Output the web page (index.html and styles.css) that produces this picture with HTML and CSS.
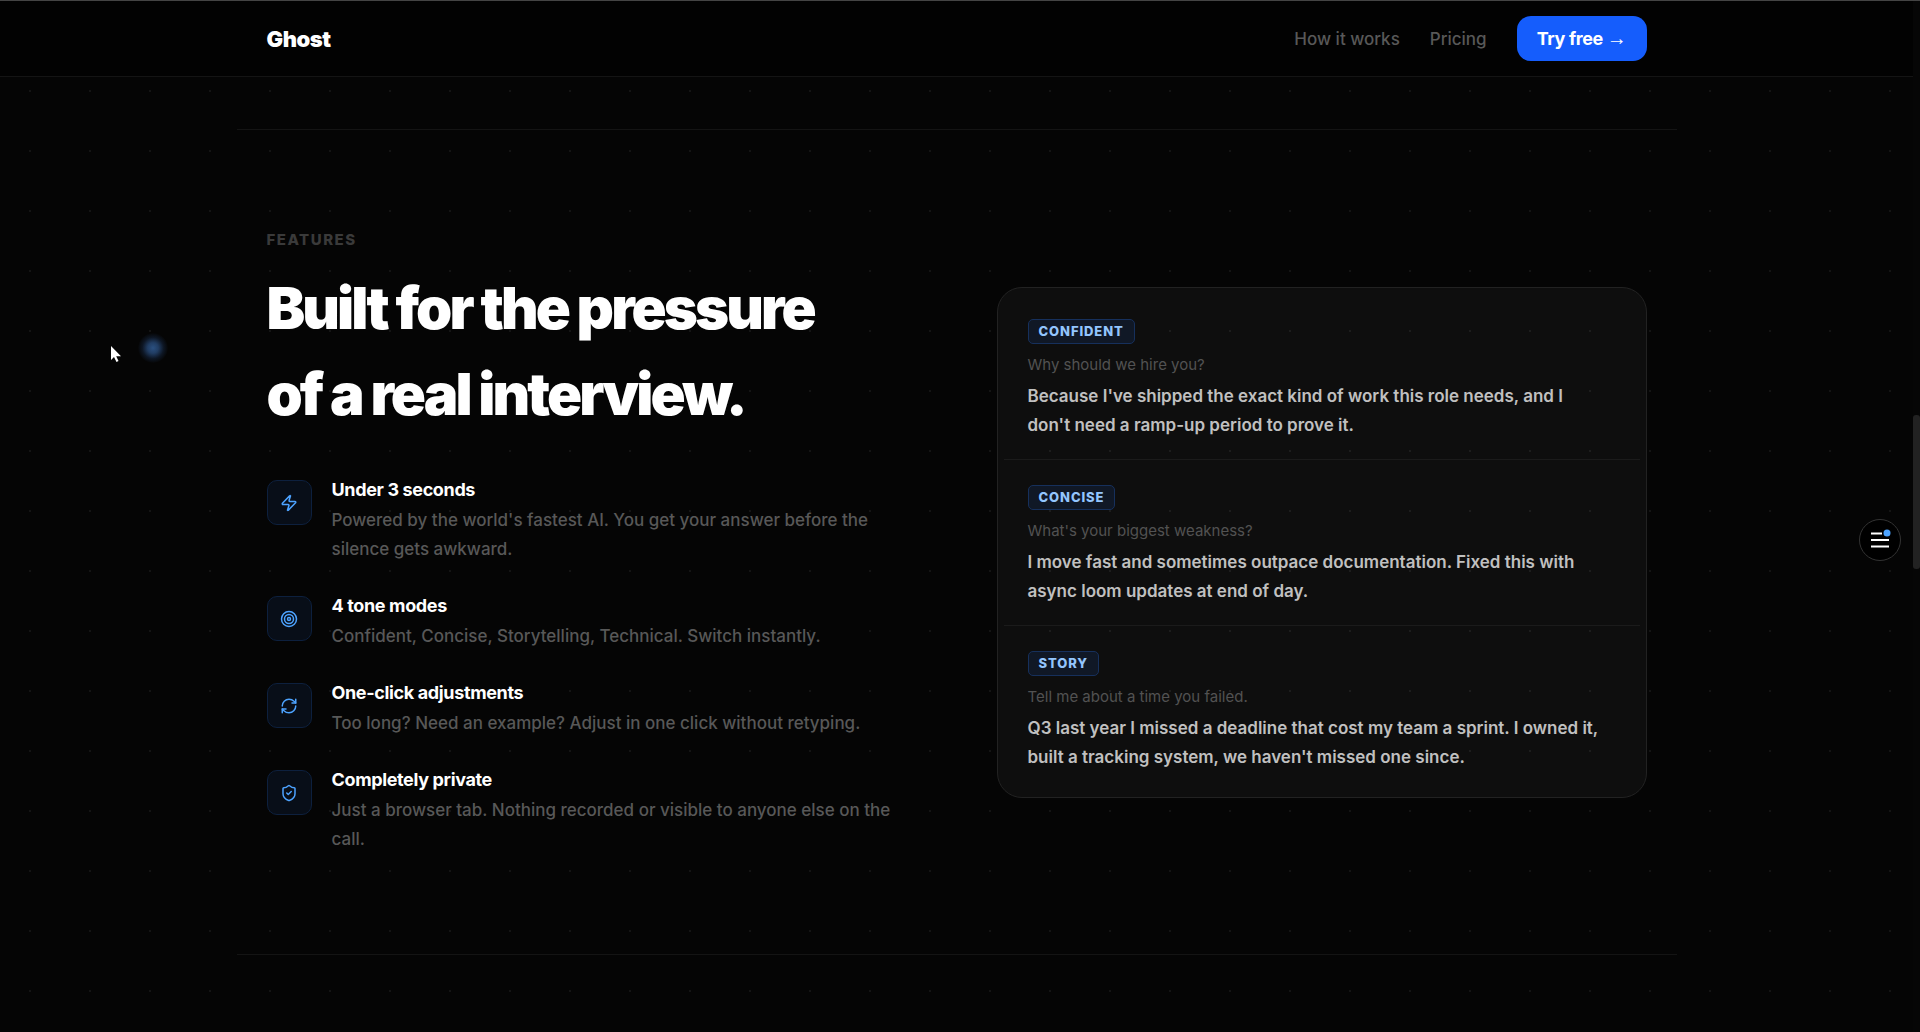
FILE: index.html
```html
<!DOCTYPE html>
<html lang="en">

<head>
    <meta charset="UTF-8">
    <meta name="viewport" content="width=device-width, initial-scale=1.0">
    <title>Ghost</title>
    <link rel="stylesheet" href="styles.css">
</head>

<body>
    <div class="page">
        <header class="nav">
            <div class="nav-inner">
                <a class="logo" href="#">Ghost</a>
                <nav class="nav-links">
                    <a href="#how">How it works</a>
                    <a href="#pricing">Pricing</a>
                    <button class="btn-try" type="button">Try free <span class="arrow">→</span></button>
                </nav>
            </div>
        </header>

        <main>
            <section class="features" id="features">
                <div class="features-text">
                    <p class="eyebrow">FEATURES</p>
                    <h2>Built for the pressure<br>of a real interview.</h2>

                    <ul class="feature-list">
                        <li class="feature">
                            <div class="feature-icon">
                                <svg viewBox="0 0 24 24"><path d="M4 14a1 1 0 0 1-.78-1.63l9.9-10.2a.5.5 0 0 1 .86.46l-1.92 6.02A1 1 0 0 0 13 10h7a1 1 0 0 1 .78 1.63l-9.9 10.2a.5.5 0 0 1-.86-.46l1.92-6.02A1 1 0 0 0 11 14z"/></svg>
                            </div>
                            <div>
                                <h3>Under 3 seconds</h3>
                                <p>Powered by the world's fastest AI. You get your answer before the silence gets awkward.</p>
                            </div>
                        </li>
                        <li class="feature">
                            <div class="feature-icon">
                                <svg viewBox="0 0 24 24"><circle cx="12" cy="12" r="10"/><circle cx="12" cy="12" r="6"/><circle cx="12" cy="12" r="2"/></svg>
                            </div>
                            <div>
                                <h3>4 tone modes</h3>
                                <p>Confident, Concise, Storytelling, Technical. Switch instantly.</p>
                            </div>
                        </li>
                        <li class="feature">
                            <div class="feature-icon">
                                <svg viewBox="0 0 24 24"><path d="M3 12a9 9 0 0 1 9-9 9.75 9.75 0 0 1 6.74 2.74L21 8"/><path d="M21 3v5h-5"/><path d="M21 12a9 9 0 0 1-9 9 9.75 9.75 0 0 1-6.74-2.74L3 16"/><path d="M8 16H3v5"/></svg>
                            </div>
                            <div>
                                <h3>One-click adjustments</h3>
                                <p>Too long? Need an example? Adjust in one click without retyping.</p>
                            </div>
                        </li>
                        <li class="feature">
                            <div class="feature-icon">
                                <svg viewBox="0 0 24 24"><path d="M20 13c0 5-3.5 7.5-7.66 8.95a1 1 0 0 1-.67-.01C7.5 20.5 4 18 4 13V6a1 1 0 0 1 1-1c2 0 4.500-1.200 6.240-2.720a1.170 1.170 0 0 1 1.520 0C14.510 3.810 17 5 19 5a1 1 0 0 1 1 1z"/><path d="m9 12 2 2 4-4"/></svg>
                            </div>
                            <div>
                                <h3>Completely private</h3>
                                <p>Just a browser tab. Nothing recorded or visible to anyone else on the call.</p>
                            </div>
                        </li>
                    </ul>
                </div>

                <div class="answers">
                    <article class="answer">
                        <span class="tag">CONFIDENT</span>
                        <p class="question">Why should we hire you?</p>
                        <p class="reply">Because I've shipped the exact kind of work this role needs, and I don't need a ramp-up period to prove it.</p>
                    </article>
                    <article class="answer">
                        <span class="tag">CONCISE</span>
                        <p class="question">What's your biggest weakness?</p>
                        <p class="reply">I move fast and sometimes outpace documentation. Fixed this with async loom updates at end of day.</p>
                    </article>
                    <article class="answer">
                        <span class="tag">STORY</span>
                        <p class="question">Tell me about a time you failed.</p>
                        <p class="reply">Q3 last year I missed a deadline that cost my team a sprint. I owned it, built a tracking system, we haven't missed one since.</p>
                    </article>
                </div>
            </section>
        </main>
    </div>

    <div class="scrollbar"><div class="thumb"></div></div>

    <button class="menu-fab" type="button" aria-label="Menu">
        <svg viewBox="0 0 42 42">
            <path d="M12 14.500h11M12 21h18M12 27.500h18" stroke="#fff" stroke-width="2"/>
            <circle cx="28" cy="14" r="3.500" fill="#4da3ff"/>
        </svg>
    </button>

    <div class="glow"></div>
    <svg class="cursor" viewBox="0 0 12 18"><path d="M1 1v14l3-3 2.500 5 2-1-2.300-4.700H11z" fill="#fff"/></svg>
</body>

</html>
```
FILE: styles.css
```css
* {
    box-sizing: border-box;
    margin: 0;
    padding: 0;
}

body {
    display: flex;
    min-height: 100vh;
    border-top: 1px solid #444;
    background-color: #050505;
    background-image: radial-gradient(circle, rgba(255, 255, 255, 0.06) 1px, transparent 1px);
    background-size: 60px 60px;
    background-position: 0 1px;
    color: #fff;
    font-family: Inter, "Liberation Sans", sans-serif;
    font-size: 17px;
    overflow: hidden;
}

.page {
    flex: 1;
}

/* nav */
.nav {
    height: 76px;
    background: #020202;
    border-bottom: 1px solid #141414;
}

.nav-inner {
    display: flex;
    align-items: center;
    justify-content: space-between;
    max-width: 1440px;
    height: 100%;
    margin: 0 auto;
    padding: 0 30px;
}

.logo {
    color: #fff;
    font-size: 22px;
    font-weight: 900;
    letter-spacing: -0.02em;
    text-decoration: none;
}

.nav-links {
    display: flex;
    align-items: center;
    gap: 30px;
}

.nav-links a {
    color: #585858;
    font-size: 17px;
    font-weight: 500;
    text-decoration: none;
}

.btn-try {
    height: 45px;
    padding: 0 20px;
    border: none;
    border-radius: 14px;
    background: #155dfc;
    color: #fff;
    font-family: inherit;
    font-size: 18px;
    font-weight: 700;
    letter-spacing: -0.02em;
    cursor: pointer;
}

.arrow {
    font-family: "Liberation Sans", sans-serif;
    font-size: 20px;
    font-weight: 400;
    line-height: 1;
}

/* features */
.features {
    display: grid;
    grid-template-columns: 1fr 1fr;
    gap: 80px;
    align-items: center;
    max-width: 1440px;
    margin: 52px auto 0;
    padding: 100px 30px;
    border-top: 1px solid #141414;
    border-bottom: 1px solid #141414;
}

.eyebrow {
    margin-bottom: 15px;
    color: #3a3a3a;
    font-size: 15px;
    font-weight: 800;
    line-height: 20px;
    letter-spacing: 0.1em;
}

h2 {
    margin-bottom: 40px;
    font-size: 58px;
    font-weight: 900;
    line-height: 86px;
    letter-spacing: -0.05em;
}

.feature-list {
    display: flex;
    flex-direction: column;
    gap: 29px;
    list-style: none;
}

.feature {
    display: flex;
    gap: 20px;
}

.feature-icon {
    display: flex;
    flex-shrink: 0;
    align-items: center;
    justify-content: center;
    width: 45px;
    height: 45px;
    margin-top: 3px;
    border: 1px solid #0d203e;
    border-radius: 10px;
    background: #080e18;
}

.feature-icon svg {
    width: 18px;
    height: 18px;
    fill: none;
    stroke: #4da3ff;
    stroke-width: 2;
    stroke-linecap: round;
    stroke-linejoin: round;
}

.feature h3 {
    margin-bottom: 3px;
    font-size: 18px;
    font-weight: 700;
    line-height: 26px;
    letter-spacing: -0.02em;
}

.feature p {
    color: #585858;
    font-size: 17px;
    font-weight: 500;
    line-height: 29px;
}

/* sample answers */
.answers {
    padding: 6px;
    border: 1px solid #222;
    border-radius: 25px;
    background: rgba(255, 255, 255, 0.04);
}

.answer {
    padding: 25px 32px 19px 24px;
    border-bottom: 1px solid #1b1b1b;
}

.answer:last-child {
    border-bottom: none;
}

.tag {
    display: block;
    width: fit-content;
    height: 25px;
    margin-bottom: 10px;
    padding: 0 10px;
    border: 1px solid #16305c;
    border-radius: 5px;
    background: #101826;
    color: #93c5fd;
    font-size: 13px;
    font-weight: 800;
    line-height: 22px;
    letter-spacing: 0.07em;
}

.question {
    margin-bottom: 6px;
    color: #525252;
    font-size: 15px;
    line-height: 22px;
}

.reply {
    color: #c0c0c0;
    font-size: 17px;
    font-weight: 600;
    line-height: 29px;
}

/* floating things */
.scrollbar {
    width: 7px;
    padding-top: 414px;
    background: #060606;
}

.thumb {
    height: 154px;
    border-radius: 3px;
    background: #222;
}

.menu-fab {
    position: absolute;
    top: 519px;
    right: 19px;
    width: 42px;
    height: 42px;
    border: 1px solid #333;
    border-radius: 50%;
    background: #000;
    cursor: pointer;
}

.menu-fab svg {
    position: absolute;
    inset: -1px;
    width: 42px;
    height: 42px;
}

.glow {
    position: absolute;
    top: 333px;
    left: 138px;
    width: 30px;
    height: 30px;
    border-radius: 50%;
    background: radial-gradient(circle, #2b5080 0%, #213d63 25%, rgba(22, 40, 68, 0.5) 50%, transparent 72%);
}

.cursor {
    position: absolute;
    top: 345px;
    left: 110px;
    width: 12px;
    height: 18px;
}
```
